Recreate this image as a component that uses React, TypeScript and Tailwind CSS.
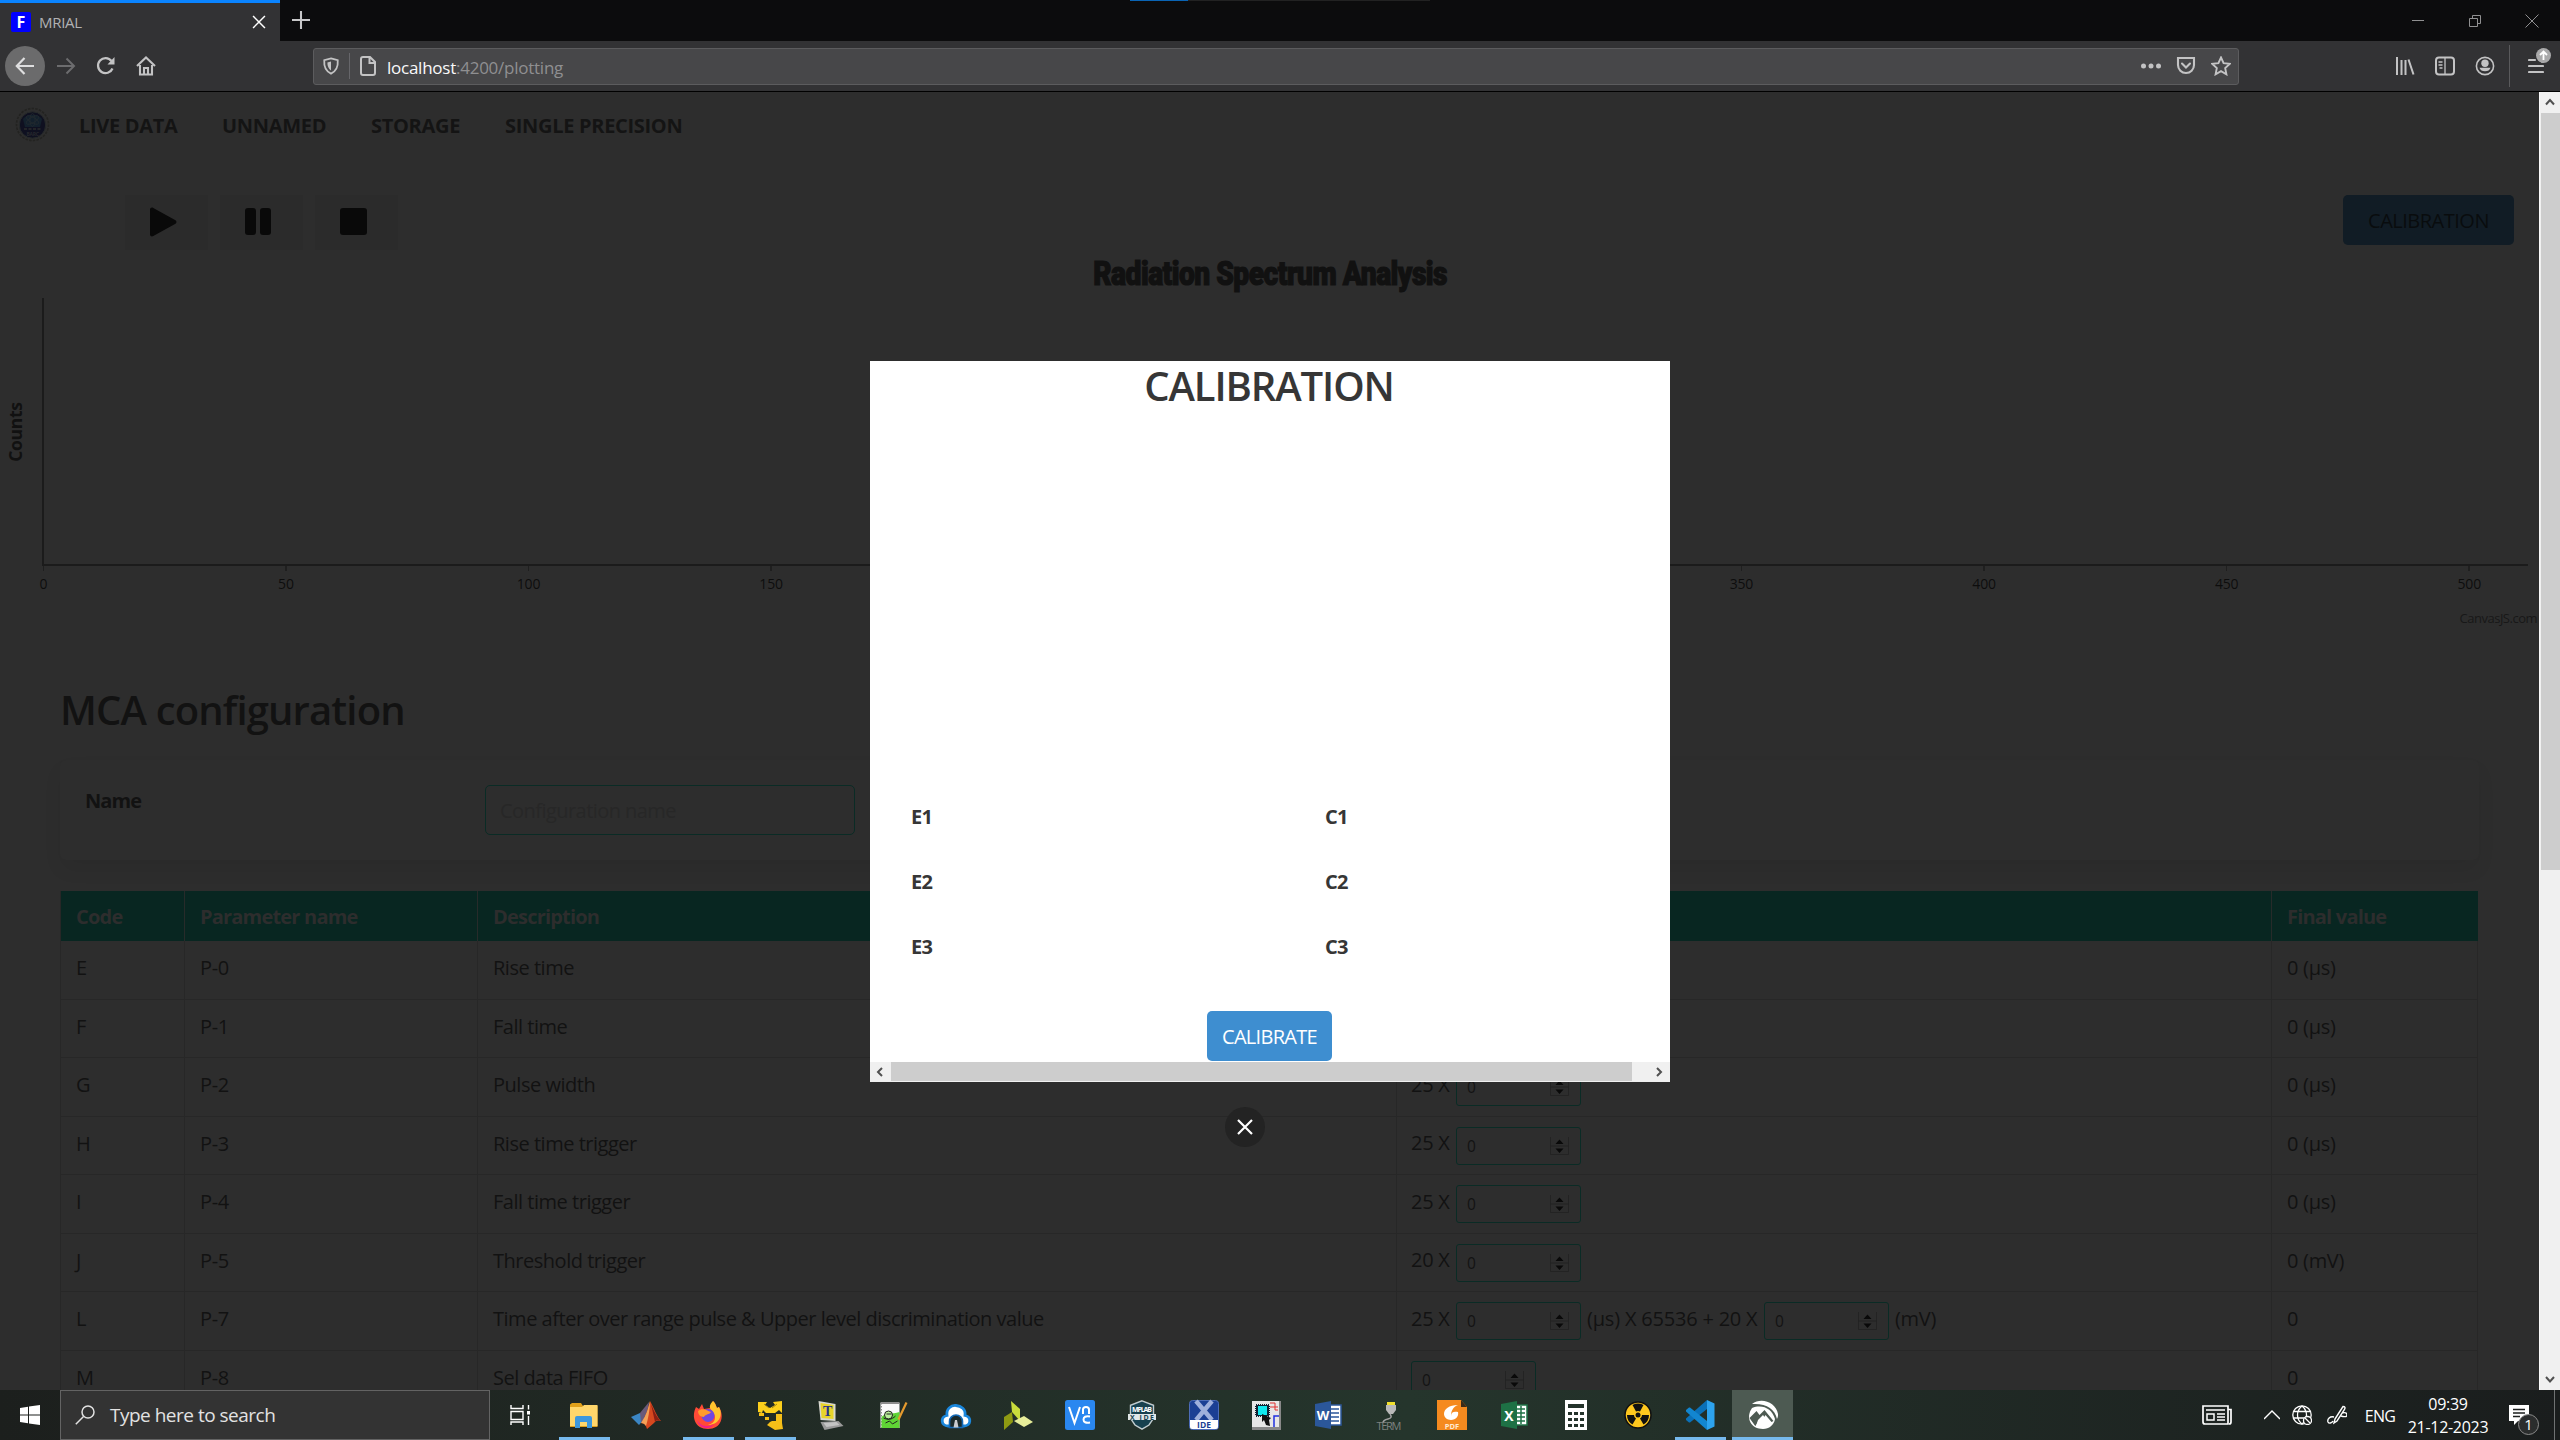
import React from "react";

type Children = { children?: React.ReactNode };

function Glyph({ s = 20, vb = 20, w = 1.8, className = "", children }: Children & { s?: number; vb?: number; w?: number; className?: string }) {
  return (
    <svg
      width={s}
      height={s}
      viewBox={`0 0 ${vb} ${vb}`}
      fill="none"
      stroke="currentColor"
      strokeWidth={w}
      className={`shrink-0 ${className}`}
    >
      {children}
    </svg>
  );
}

/* ---------- browser chrome ---------- */

function TabStrip() {
  return (
    <div className="relative flex h-[41px] shrink-0 bg-[#0c0c0d]">
      <div className="flex w-[280px] items-center border-t-[3px] border-t-[#0a84ff] bg-[#323234] pl-[11px] pr-[14px]">
        <div className="flex h-5 w-5 items-center justify-center rounded-[2px] bg-[#0000ff] text-[16px] leading-none font-bold text-white">F</div>
        <span className="ml-2 text-[15px] leading-[20px] tracking-[-0.3px] text-[#b1b1b3]">MRIAL</span>
        <Glyph s={14} w={2.2} className="ml-auto text-white">
          <path d="M1.5 1.5 18.5 18.5M18.5 1.5 1.5 18.5" />
        </Glyph>
      </div>
      <Glyph s={18} w={2.3} className="ml-3 mt-[11px] text-[#c8c8c9]">
        <path d="M10 0v20M0 10h20" />
      </Glyph>
      <div className="absolute left-[1130px] top-0 flex h-px w-[300px] bg-[#222]">
        <div className="w-[58px] bg-[#0a64b4]" />
      </div>
      <div className="ml-auto flex items-center gap-[43px] pr-[21px] text-[#909091]">
        <Glyph s={14} vb={14} w={1}>
          <path d="M1 6.5h12" />
        </Glyph>
        <Glyph s={14} vb={14} w={1}>
          <path d="M1.5 4.5h8v8h-8zM4.5 4.500v-3h8v8h-3" />
        </Glyph>
        <Glyph s={14} vb={14} w={1}>
          <path d="M.5.5l13 13M13.500.5l-13 13" />
        </Glyph>
      </div>
    </div>
  );
}

function NavBar() {
  return (
    <div className="flex h-[51px] shrink-0 items-center border-b border-black bg-[#323234] text-[#c3c3c4]">
      <div className="ml-[5px] flex h-10 w-10 items-center justify-center rounded-full bg-[#6b6b6c] text-[#dededf]">
        <Glyph w={2.2}>
          <path d="M19 10H2M9.500 2 1.800 10l7.700 8" />
        </Glyph>
      </div>
      <Glyph w={2} className="ml-[11px] text-[#6c6c6e]">
        <path d="M1 10h17M10.500 2.500 18 10l-7.500 7.500" />
      </Glyph>
      <Glyph w={2.3} className="ml-5">
        <path d="M16.500 12.500A7.500 7.500 0 1 1 15.500 5" />
        <path d="M18.500 1v7.500h-7z" fill="currentColor" stroke="none" />
      </Glyph>
      <Glyph w={2.1} className="ml-5">
        <path d="M1 10 10 1.500 19 10M4 9v9.500h12V9" />
        <path d="M8 18v-6h4v6" />
      </Glyph>
      <div className="ml-[157px] flex h-[37px] w-[1926px] items-center rounded-[3px] border border-[#5c5c5e] bg-[#474749]">
        <Glyph s={18} w={2} className="ml-2">
          <path d="M10 1.500 17.500 3.500c.5 7-1 12-7.500 15-6.500-3-8-8-7.500-15z" />
          <path d="M10 5v10c-3-2-4-5-4-8.800z" fill="currentColor" stroke="none" />
        </Glyph>
        <div className="ml-[9px] h-[26px] w-px bg-[#66666a]" />
        <Glyph s={20} w={2} className="ml-2">
          <path d="M3 3a2 2 0 0 1 2-2h7l5 5v11a2 2 0 0 1-2 2H5a2 2 0 0 1-2-2zM11.500 1v6H17" />
        </Glyph>
        <span className="ml-[9px] pt-[3px] text-[17px] tracking-[-0.25px] text-[#8f8f91]">
          <span className="text-[#f9f9fa]">localhost</span>:4200/plotting
        </span>
        <Glyph className="ml-auto">
          <g fill="currentColor" stroke="none">
            <circle cx="2.500" cy="10" r="2.500" />
            <circle cx="10" cy="10" r="2.500" />
            <circle cx="17.500" cy="10" r="2.500" />
          </g>
        </Glyph>
        <Glyph w={2.100} className="ml-[15px]">
          <path d="M2 2h16v7a8 8 0 0 1-16 0z" />
          <path d="M6 7.500l4 4 4-4" strokeLinecap="round" />
        </Glyph>
        <Glyph w={1.900} className="mr-[7px] ml-[15px]">
          <path d="M10 1.500l2.600 5.700 6.100.7-4.500 4.200 1.200 6.200L10 15.200l-5.400 3.100 1.200-6.200L1.300 7.900l6.100-.7z" />
        </Glyph>
      </div>
      <Glyph w={2} className="ml-[156px]">
        <path d="M2 1v18M6.500 4v15M10.500 4v15M13.500 3.500l5 15" />
      </Glyph>
      <Glyph w={2} className="ml-5">
        <rect x="1" y="1.500" width="18" height="17" rx="3" />
        <path d="M10 2v16M3.500 6h4M3.500 9h4M4.500 12h3" strokeWidth="1.300" />
      </Glyph>
      <Glyph w={1.600} className="ml-5">
        <circle cx="10" cy="10" r="8.600" />
        <circle cx="10" cy="7.200" r="3.700" fill="currentColor" stroke="none" />
        <path d="M4.500 11.800h11a5.700 4.800 0 0 1-11 0z" fill="currentColor" stroke="none" />
      </Glyph>
      <div className="ml-[14px] h-[42px] w-px bg-[#5a5a5c]" />
      <div className="relative ml-[18px]">
        <Glyph s={16} vb={16} w={2.200}>
          <path d="M1 2h6M1 8h14M1 14h14" strokeLinecap="round" />
        </Glyph>
        <div className="absolute -top-[10px] left-[8px] flex h-[15px] w-[15px] items-center justify-center rounded-full bg-[#a9a9aa] text-white">
          <Glyph s={11} vb={11} w={1.800}>
            <path d="M5.500 10V1.500M2 5l3.500-3.500L9 5" />
          </Glyph>
        </div>
      </div>
    </div>
  );
}

/* ---------- page ---------- */

function Emblem() {
  return (
    <svg width="35" height="35" viewBox="0 0 35 35" className="mb-[2px] ml-[15px] shrink-0">
      <circle cx="17.500" cy="17.500" r="16" fill="none" stroke="#232321" strokeWidth="1.600" strokeDasharray="2.500 1.200" />
      <circle cx="17.500" cy="18" r="13.200" fill="#0f1020" stroke="#262a2a" />
      <path d="M8 12a13 13 0 0 1 19 0l-2 8H10z" fill="#13202c" />
      <g fill="none" stroke="#222a2e" strokeWidth=".8">
        <ellipse cx="17.500" cy="13" rx="7" ry="2.800" transform="rotate(30 17.500 13)" />
        <ellipse cx="17.500" cy="13" rx="7" ry="2.800" transform="rotate(-30 17.500 13)" />
        <ellipse cx="17.500" cy="13" rx="2.600" ry="6.500" />
      </g>
      <path d="M9 22h17" stroke="#222428" strokeWidth="2.200" strokeDasharray="3 1.500" />
      <text x="17.500" y="29" textAnchor="middle" fontSize="5" fontWeight="700" fill="#27282d">BARC</text>
    </svg>
  );
}

function SiteNav() {
  return (
    <nav className="flex h-[66px] shrink-0 items-center text-[20px] font-bold tracking-[-0.300px] text-[#141414]">
      <Emblem />
      <span className="ml-[29px] w-[143px] pt-[2px]">LIVE DATA</span>
      <span className="w-[149px] pt-[2px]">UNNAMED</span>
      <span className="w-[134px] pt-[2px]">STORAGE</span>
      <span className="pt-[2px]">SINGLE PRECISION</span>
    </nav>
  );
}

function Controls() {
  return (
    <div className="mt-[37px] flex h-[55px] shrink-0 items-start gap-3 pl-[125px] pr-[25px]">
      <div className="h-[55px] w-[83px] bg-[#2b2b2b] pl-[25px] pt-3">
        <svg width="27" height="30" viewBox="0 0 27 30" fill="#090909">
          <path d="M0 2.500C0 .6 2 0 3.300 1L25.500 13.300c1.300.8 1.300 2.600 0 3.400L3.300 29C2 30 0 29.400 0 27.500z" />
        </svg>
      </div>
      <div className="flex h-[55px] w-[83px] gap-1 bg-[#2b2b2b] pl-[25px] pt-[13px]">
        <div className="h-[27px] w-[11px] rounded-[3px] bg-[#090909]" />
        <div className="h-[27px] w-[11px] rounded-[3px] bg-[#090909]" />
      </div>
      <div className="h-[55px] w-[83px] bg-[#2b2b2b] pl-[25px] pt-[13px]">
        <div className="h-[27px] w-[27px] rounded-[3px] bg-[#090909]" />
      </div>
      <div className="ml-auto flex h-[50px] w-[171px] items-center justify-center rounded-[5px] bg-[#111c25] pt-[2px] text-[20px] tracking-[-0.5px] text-[#090c0e]">
        CALIBRATION
      </div>
    </div>
  );
}

const ticks = ["0", "50", "100", "150", "200", "250", "300", "350", "400", "450", "500"];

function Spectrum() {
  return (
    <section className="flex h-[384px] shrink-0 flex-col">
      <h2 className="flex h-[47px] shrink-0 items-center justify-center pl-px font-[Roboto] text-[33px] font-black text-[#111]">
        <span className="scale-x-[0.854] tracking-[-0.6px] whitespace-nowrap [-webkit-text-stroke:1.2px_#111]">Radiation Spectrum Analysis</span>
      </h2>
      <div className="mt-px flex h-[268px] shrink-0">
        <div className="flex w-[42px] items-center justify-center pr-[13px]">
          <span className="-rotate-90 text-[17.500px] font-bold tracking-[-0.300px] text-[#111]">Counts</span>
        </div>
        <div className="w-[2486px] border-b-2 border-l-2 border-[#1b1b1b]" />
      </div>
      <div className="-ml-[78px] flex">
        {ticks.map((t) => (
          <div key={t} className="flex w-[242.600px] shrink-0 flex-col items-center text-[14px] leading-[20px] tracking-[-0.200px] text-[#0d0d0d]">
            <div className="h-[5px] w-[1.500px] bg-[#1f1f1f]" />
            <span className="mt-[3px]">{t}</span>
          </div>
        ))}
      </div>
      <div className="mt-[14px] pr-[2px] text-right text-[13px] leading-[20px] tracking-[-0.500px] text-[#181818]">CanvasJS.com</div>
    </section>
  );
}

function NumberBox() {
  return (
    <div className="flex h-[38px] w-[125px] shrink-0 items-center justify-between rounded-[3px] border border-[#0a2b25] pl-[10px] pr-[11px]">
      <span className="pt-px text-[15.500px] text-[#131313]">0</span>
      <svg width="19" height="18" viewBox="0 0 19 18">
        <path d="M.5 0v17.500h18V0M.5 9h18" fill="none" stroke="#232323" />
        <path d="M5.500 7h8l-4-4.500zM5.500 11.500h8l-4 4.500z" fill="#090909" />
      </svg>
    </div>
  );
}

type Row = { code: string; name: string; desc: string; factor: string; final: string };

const rows: Row[] = [
  { code: "E", name: "P-0", desc: "Rise time", factor: "25 X", final: "0 (μs)" },
  { code: "F", name: "P-1", desc: "Fall time", factor: "25 X", final: "0 (μs)" },
  { code: "G", name: "P-2", desc: "Pulse width", factor: "25 X", final: "0 (μs)" },
  { code: "H", name: "P-3", desc: "Rise time trigger", factor: "25 X", final: "0 (μs)" },
  { code: "I", name: "P-4", desc: "Fall time trigger", factor: "25 X", final: "0 (μs)" },
  { code: "J", name: "P-5", desc: "Threshold trigger", factor: "20 X", final: "0 (mV)" },
  { code: "L", name: "P-7", desc: "Time after over range pulse & Upper level discrimination value", factor: "25 X", final: "0" },
  { code: "M", name: "P-8", desc: "Sel data FIFO", factor: "", final: "0" },
];

function ConfigTable() {
  const cell = "flex items-center border-r border-b border-[#272727] pl-[15px] pb-[3px] whitespace-pre";
  return (
    <div className="mt-[31px] w-[2418px] border-l border-[#272727] text-[20px] tracking-[-0.3px] text-[#121212]">
      <div className="grid h-[50px] grid-cols-[124px_293px_919px_875px_206px] bg-[#082621] font-bold tracking-[-0.8px] text-[#2d2d2d]">
        {["Code", "Parameter name", "Description", "Value", "Final value"].map((h, i) => (
          <div key={h} className={`flex items-center pl-[15px] pt-[2px] ${i < 4 ? "border-r border-[#272b2a]" : ""}`}>
            {h}
          </div>
        ))}
      </div>
      {rows.map((r) => (
        <div key={r.code} className="grid h-[58.500px] grid-cols-[124px_293px_919px_875px_206px]">
          <div className={cell}>{r.code}</div>
          <div className={cell}>{r.name}</div>
          <div className={`${cell} tracking-[-0.480px]`}>{r.desc}</div>
          <div className="flex items-center border-r border-b border-[#272727] pt-px pl-[14px] whitespace-pre">
            {r.factor && <span className="w-[45px] pb-[5px]">{r.factor}</span>}
            <NumberBox />
            {r.code === "L" && (
              <>
                <span className="w-[183px] pb-[5px] pl-[6px] tracking-[-0.200px]">(μs) X 65536 + 20 X</span>
                <NumberBox />
                <span className="pb-[5px] pl-[6px]">(mV)</span>
              </>
            )}
          </div>
          <div className={cell}>{r.final}</div>
        </div>
      ))}
    </div>
  );
}

function PageBody() {
  return (
    <div className="flex min-w-0 flex-1 flex-col overflow-hidden bg-[#2d2d2d]">
      <SiteNav />
      <Controls />
      <Spectrum />
      <section className="shrink-0 pl-[60px]">
        <h1 className="mt-[46px] h-[60px] text-[40px] leading-[60px] font-semibold tracking-[-0.850px] text-[#121212]">MCA configuration</h1>
        <div className="mt-[20px] flex h-[100px] w-[2419px] rounded-[6px] bg-[#2d2d2d] pl-[25px] shadow-[0_10px_20px_-2px_rgba(0,0,0,0.07)]">
          <span className="w-[400px] pt-[26px] text-[20px] leading-[30px] font-bold tracking-[-0.900px] text-[#121212]">Name</span>
          <div className="mt-[25px] flex h-[50px] w-[370px] items-center rounded-[5px] border border-[#0a2b25] pt-[2px] pl-[14px] text-[20px] tracking-[-0.550px] text-[#272727]">
            Configuration name
          </div>
        </div>
        <ConfigTable />
      </section>
    </div>
  );
}

function PageScrollbar() {
  return (
    <div className="flex w-[21px] shrink-0 flex-col items-center border-l border-[#fafafa] bg-[#f0f0f0] text-[#505050]">
      <Glyph s={10} vb={10} w={2} className="mt-[5px] mb-[6px]">
        <path d="M1 7.500l4-4.500 4 4.500" />
      </Glyph>
      <div className="h-[757px] w-[19px] bg-[#cdcdcd]" />
      <Glyph s={10} vb={10} w={2} className="mt-auto mb-[6px]">
        <path d="M1 3l4 4.500L9 3" />
      </Glyph>
    </div>
  );
}

function CalibrationDialog() {
  return (
    <div className="absolute left-[870px] top-[361px] flex h-[721px] w-[800px] flex-col bg-white text-[#363636]">
      <h2 className="h-[50px] pr-[2px] text-center text-[40px] leading-[49px] font-semibold tracking-[-1.100px]">CALIBRATION</h2>
      <div className="mt-[373px] grid grid-cols-[414px_1fr] pl-[41px] text-[20px] leading-[65px] font-bold tracking-[-0.800px]">
        {["E1", "C1", "E2", "C2", "E3", "C3"].map((l) => (
          <span key={l}>{l}</span>
        ))}
      </div>
      <div className="mt-[32px] ml-[337px] flex h-[50px] w-[125px] items-center justify-center rounded-[5px] bg-[#3e8ed0] pt-[2px] text-[20px] tracking-[-0.700px] text-white">
        CALIBRATE
      </div>
      <div className="mt-px flex h-5 items-center bg-[#f0f0f0] text-[#505050]">
        <Glyph s={10} vb={10} w={2} className="ml-[5px] mr-[6px]">
          <path d="M7 1 3 5l4 4" />
        </Glyph>
        <div className="mb-px h-[19px] w-[741px] bg-[#cdcdcd]" />
        <Glyph s={10} vb={10} w={2} className="ml-auto mr-[6px]">
          <path d="M3 1l4 4-4 4" />
        </Glyph>
      </div>
      <div className="absolute left-[355px] top-[746px] flex h-10 w-10 items-center justify-center rounded-full bg-[#232323] text-white">
        <Glyph s={16} vb={16} w={2.200}>
          <path d="M1 1l14 14M15 1 1 15" />
        </Glyph>
      </div>
    </div>
  );
}

/* ---------- taskbar ---------- */

const apps: { id: string; on?: boolean; active?: boolean; art: React.ReactNode }[] = [
  {
    id: "explorer",
    on: true,
    art: (
      <>
        <path d="M1 4.500 3 3h9l2 3h14.500v21H1z" fill="#e0a01a" />
        <path d="M1 7h12l2-2h13.500v21H1z" fill="#ffd66b" />
        <path d="M6 28V18q0-2 2-2h13q2 0 2 2v10h-5v-6h-7v6z" fill="#3d97dc" />
      </>
    ),
  },
  {
    id: "matlab",
    art: (
      <>
        <path d="M0 17l9-4 5 5-6 7z" fill="#3b86c4" />
        <path d="M9 13l9-11c-1 9-3 14-8 20z" fill="#6a5a7a" />
        <path d="M19 1c4 7 7 16 11 20-3-1-5-1-7 2l-7 6c-1-4-3-6-6-6C15 16 17 9 19 1z" fill="#d7481f" />
        <path d="M19 1c0 9-2 18-4 25-1-2-3-3-5-3C15 16 17 9 19 1z" fill="#f4a258" />
        <path d="M20 4c3 7 6 14 10 17-3-1-5-1-6 1z" fill="#8a1f14" />
      </>
    ),
  },
  {
    id: "firefox",
    on: true,
    art: (
      <>
        <path d="M3 7l3 2 3-5 2 5 6-1 3-7c3 3 3 5 4 7l2-1c6 10 2 22-11 22C2 29-2 17 3 7z" fill="#ff4a36" />
        <path d="M20 1c-4 4-4 7-1 10 5 5 4 12-4 14 10 0 16-9 11-18l-2 1c-1-2-1-4-4-7z" fill="#ffc52e" />
        <path d="M4 20c3 6 11 8 17 4-2 5-14 7-17-4z" fill="#f0208c" />
        <circle cx="15" cy="15.500" r="6.500" fill="#7048e0" />
        <path d="M5 11c5-4 9 0 13 1-2 3-6 2-7 5-4 0-6-3-6-6z" fill="#ff9c2c" />
      </>
    ),
  },
  {
    id: "flow",
    on: true,
    art: (
      <>
        <path d="M3 2h9l-2 3 5 3 5-3-2-3 9-1v12l-3-3-4 3h-9L8 10l-1 3-4-1z" fill="#fdd01c" />
        <path d="M10 17h4v3h-4zM4 13h5v3H4zM17 21h4v-7h6v9l1 6-8 1-8-5 3-3z" fill="#f6bf18" />
        <path d="M9 4l5 4M22 4l-5 4" stroke="#8a7010" strokeWidth=".8" />
      </>
    ),
  },
  {
    id: "teraterm",
    art: (
      <g transform="translate(-2.500 0)">
        <path d="M4 1l17 3v17L6 20z" fill="#d8d8d0" />
        <path d="M6 3l13 2v14L7 18z" fill="#e8d42a" />
        <text x="8.500" y="16" fontFamily="Liberation Serif" fontSize="14" fontWeight="700" fill="#28348a">T</text>
        <path d="M6 22l18-1 5 5-19 4z" fill="#9a9a9a" />
        <path d="M9 23l13-1 3 3-13 2z" fill="#c4c4c4" />
      </g>
    ),
  },
  {
    id: "notepad",
    art: (
      <g transform="translate(-1.500 0)">
        <path d="M3 3h19v25H3z" fill="#fafafa" />
        <path d="M4 3v25" stroke="#909090" strokeDasharray="1.500 1.500" />
        <path d="M3 2h19v2H3z" fill="#8d8d8d" />
        <path d="M4 17c6-6 10-2 18-5v16H4z" fill="#5fd435" />
        <circle cx="11" cy="15" r="4" fill="#b9ee9a" stroke="#222" />
        <path d="M9 14h5M6 18c4 2 8 2 12-2M8 23l4-2 3 3 5-3" stroke="#222" fill="none" />
        <path d="M20 19 28 2l2 1-8 17z" fill="#e49a2e" />
      </g>
    ),
  },
  {
    id: "cloud",
    art: (
      <>
        <path d="M7 26C0 26-1 17 6 15.500 5 9 10 5 15 5.500S25 9 24 15.500C31 17 30 26 23 26z" fill="#fff" stroke="#1b87dc" strokeWidth="2.800" />
        <path d="M8.500 27.500v-6a6.500 6.500 0 0 1 13 0v6z" fill="#1b2a2b" stroke="#1468b4" strokeWidth="1.600" />
        <path d="M14 20h2l1.500 7.500h-5z" fill="#c9ccd0" />
      </>
    ),
  },
  {
    id: "vivado",
    art: (
      <>
        <path d="M8 1l9 8v12l-8-9z" fill="#c9dc3c" />
        <path d="M1 17l8-5 1 10-9 8z" fill="#8f9a12" />
        <path d="M11 21l10-5 9 6-9 5z" fill="#e7ee9a" />
      </>
    ),
  },
  {
    id: "vnc",
    art: (
      <>
        <rect width="30" height="30" rx="2.500" fill="#2a87f0" />
        <path d="M4 7l5.500 16L15 7M18 14V9.500q0-2.500 3-2.500t3 2.500V14M25 16.500q-6.500-1-6.500 3t6.500 3" fill="none" stroke="#fff" strokeWidth="2" />
      </>
    ),
  },
  {
    id: "mplab",
    art: (
      <>
        <path d="M15 .8l11.500 4.500v13L22 25l-7 4.200L8 25l-4.500-6.700v-13z" fill="#17414f" stroke="#c2cdd0" strokeWidth="1.400" />
        <path d="M1 14h28v6H1z" fill="#dfe6e8" />
        <text x="15" y="12" textAnchor="middle" fontSize="7" fontWeight="700" fill="#fff" textLength="20">MPLAB</text>
        <text x="15" y="19.500" textAnchor="middle" fontSize="7" fontWeight="700" fill="#17414f" textLength="24">X IDE</text>
      </>
    ),
  },
  {
    id: "xide",
    art: (
      <>
        <rect x=".5" y=".5" width="29" height="29" rx="3" fill="#1b3f94" stroke="#4d6cb8" />
        <path d="M7 1l16 19M23 1 7 20" stroke="#9fb0dc" strokeWidth="4.500" />
        <path d="M1 20h28v7q0 2-2 2H3q-2 0-2-2z" fill="#fff" />
        <text x="15" y="28" textAnchor="middle" fontSize="8.500" fontWeight="700" fill="#1b3f94">IDE</text>
      </>
    ),
  },
  {
    id: "pcb",
    art: (
      <>
        <path d="M1 1h29v29H1z" fill="#888" />
        <path d="M1 1h27v26H1z" fill="#e6e6e6" />
        <path d="M5 5h13v11H5z" fill="#123" strokeDasharray="1 1" stroke="#123" strokeWidth="2" />
        <path d="M7 6h9v9H7z" fill="#10e8ee" />
        <path d="M19 3h5v7h3M19 7h8" fill="none" stroke="#e03030" />
        <path d="M23 27V16h5" fill="none" stroke="#2030e0" strokeWidth="1.500" />
        <path d="M11 14l9 4-2 2 1 6-4-1-2-5-2 2z" fill="#111" />
      </>
    ),
  },
  {
    id: "word",
    art: (
      <>
        <path d="M16 5h12v20H16z" fill="#fff" stroke="#2b579a" strokeWidth="1.500" />
        <path d="M18 9h8M18 13h8M18 17h8M18 21h8" stroke="#2b579a" strokeWidth="1.500" />
        <path d="M2 4l16-3v28L2 26z" fill="#2b579a" />
        <text x="10" y="20" textAnchor="middle" fontSize="13" fontWeight="700" fill="#fff">W</text>
      </>
    ),
  },
  {
    id: "term",
    art: (
      <g transform="translate(-1 0)">
        <path d="M13 2h8v4h-8z" fill="#f1e02c" />
        <path d="M12 5h10v5l-3 4h-4l-3-4z" fill="#b9b9b9" />
        <path d="M16 14q3 4-2 5t-5 4" fill="none" stroke="#a0a0a0" strokeWidth="1.500" />
        <text x="15" y="30" textAnchor="middle" fontSize="11" fill="#7d827f" textLength="25">TERM</text>
      </g>
    ),
  },
  {
    id: "foxit",
    art: (
      <>
        <path d="M0 0h24l6 7v23H0z" fill="#f58a1f" />
        <path d="M24 0v7h6z" fill="#3a2a18" />
        <path d="M21 5C12 5 7 9 7 14c0 3 3 6 7 6 5 0 8-4 7-8-4-1-7 0-7 4 0-5 2-9 7-11z" fill="#fff" />
        <text x="15" y="28.500" textAnchor="middle" fontSize="7.500" fontWeight="700" fill="#ffe9d2">PDF</text>
      </>
    ),
  },
  {
    id: "excel",
    art: (
      <>
        <path d="M16 5h12v20H16z" fill="#fff" stroke="#1e7145" strokeWidth="1.500" />
        <path d="M18 9h8M18 13h8M18 17h8M18 21h8M22 6v18" stroke="#1e7145" strokeWidth="1.500" />
        <path d="M2 4l16-3v28L2 26z" fill="#1e7145" />
        <text x="10" y="20.500" textAnchor="middle" fontSize="14" fontWeight="700" fill="#fff">X</text>
      </>
    ),
  },
  {
    id: "calc",
    art: (
      <>
        <path d="M4 0h22v30H4z" fill="#fff" />
        <path d="M7 4h16v4H7zM7 12h4v3H7zM13 12h4v3h-4zM19 12h4v3h-4zM7 18h4v3H7zM13 18h4v3h-4zM19 18h4v3h-4zM7 24h4v3H7zM13 24h4v3h-4zM19 24h4v3h-4z" fill="#24332b" />
      </>
    ),
  },
  {
    id: "radiation",
    art: (
      <>
        <circle cx="15" cy="15" r="13" fill="#ffc81e" stroke="#111" strokeWidth="1.500" />
        <circle cx="15" cy="15" r="2.500" fill="#111" />
        <path d="M13 11.500 9.500 5a12 12 0 0 1 11 0L17 11.500a4 4 0 0 0-4 0zM11 15H4a11 11 0 0 0 5.500 9.500l3.500-6a4 4 0 0 1-2-3.500zM19 15h7a11 11 0 0 1-5.500 9.500l-3.500-6a4 4 0 0 0 2-3.500z" fill="#111" />
      </>
    ),
  },
  {
    id: "vscode",
    on: true,
    art: (
      <>
        <path d="M22 9v-9L1 18.500v1.500l3 2.500h1z" fill="#0a70b8" />
        <path d="M22 21v9L1 11.500V10l3-2.500h1z" fill="#1286d0" />
        <path d="M22 0l7.500 3.500v23L22 30z" fill="#2da3ee" />
      </>
    ),
  },
  {
    id: "active",
    on: true,
    active: true,
    art: (
      <>
        <path d="M4 4C13-3 28 2 30 14c.2 2-.4 4-1 5C27 9 18 3 4 4z" fill="#fff" />
        <path d="M4 8C15 4 24 9 27 19c-1 6-6 10-12 10C3 29-3 18 4 8z" fill="#fff" />
        <path d="M1.500 18 8.500 11l3 4 5-5 9 11-2 1-6-7-2 3-3 0-5 8-1-1z" fill="#4d5a52" />
        <path d="M10 20l5-5 8 11H8z" fill="#fff" />
      </>
    ),
  },
];

function Taskbar() {
  return (
    <div className="flex h-[50px] shrink-0 bg-gradient-to-r from-[#1c1f1d] via-[#25352c] via-55% to-[#1a1d1d] text-white">
      <div className="flex w-[60px] items-center justify-center">
        <svg width="20" height="20" viewBox="0 0 20 20" fill="#fff">
          <path d="M0 3l8-1.200V9.500H0zM9 1.600 20 0v9.500H9zM0 10.500h8v7.700L0 17zM9 10.500h11V20L9 18.400z" />
        </svg>
      </div>
      <div className="flex w-[430px] items-center border border-[#636363] bg-[#333] pl-[14px] text-[19px] tracking-[-0.500px] text-[#e2e2e2]">
        <Glyph w={1.500}>
          <circle cx="13" cy="7" r="6" />
          <path d="M8.500 11.500.8 19.200" />
        </Glyph>
        <span className="ml-[15px] pt-px">Type here to search</span>
      </div>
      <div className="flex w-[63px] items-center pl-[20px]">
        <Glyph w={1.400}>
          <path d="M1 0v3.500h12V0M1 6.500h12v8H1zM1 20v-3h12v3M18.500 0v4.500M18.500 11v9" />
          <path d="M17 6h3v3.500h-3z" fill="currentColor" stroke="none" />
        </Glyph>
      </div>
      <div className="flex">
        {apps.map((a) => (
          <div key={a.id} className={a.active ? "relative ml-px flex w-[61px] items-center justify-center bg-[#4d5a52]" : "relative flex w-[62px] items-center justify-center"}>
            <svg width="30" height="30" viewBox="0 0 30 30" className="overflow-visible">{a.art}</svg>
            {a.on && <div className={a.active ? "absolute inset-x-0 bottom-0 h-[3px] bg-[#76b9ed]" : "absolute inset-x-[5.500px] bottom-0 h-[3px] bg-[#76b9ed]"} />}
          </div>
        ))}
      </div>
      <div className="ml-auto flex items-center text-[16px]">
        <svg width="30" height="20" viewBox="0 0 30 20" fill="none" stroke="#fff" strokeWidth="1.700">
          <path d="M1 1h25v18H3q-2 0-2-2zM26 4.500h3V17q0 2-2 2" />
          <path d="M4 5h19M15 9h8M15 12h8M15 15h8M5 9h7v6H5z" strokeWidth="1.500" />
        </svg>
        <Glyph s={16} vb={16} w={1.400} className="ml-[32px]">
          <path d="M0 12 8 4l8 8" />
        </Glyph>
        <Glyph w={1.300} className="ml-3">
          <circle cx="10" cy="10" r="9.200" />
          <path d="M10 1c-6 5-6 13 0 18M10 1c6 5 6 13 0 18M2 6.500h16M1.500 13h17" />
          <circle cx="15.500" cy="15.500" r="4" fill="#1c1f1e" />
          <path d="M13 13l5 5" />
        </Glyph>
        <Glyph w={1.400} className="ml-[15px]">
          <path d="M8 14 16 1.500q3 0 1.500 3L10 16l-3 2zM7 12c-4-1-7 2-6 5 1 2 4 1 5-1M15 8c3-1 5 0 5 2s-3 2-6 1" />
        </Glyph>
        <span className="ml-[18px] pt-[2px] tracking-[-0.800px]">ENG</span>
        <div className="ml-[15px] flex w-[76px] flex-col items-center pt-px leading-[23px] tracking-[-0.300px] whitespace-nowrap">
          <span>09:39</span>
          <span>21-12-2023</span>
        </div>
        <div className="relative ml-[23px]">
          <svg width="20" height="20" viewBox="0 0 20 20">
            <path d="M0 0h20v16H9l-4 4v-4H0z" fill="#fff" />
            <path d="M4 4.500h12M4 8h12M4 11.500h7" stroke="#1c1f1e" strokeWidth="1.300" />
          </svg>
          <div className="absolute left-[9px] top-[9px] flex h-[21px] w-[21px] items-center justify-center rounded-full border border-[#8b8b8b] bg-[#2b2d2d] text-[15px] leading-none">
            1
          </div>
        </div>
        <div className="ml-[25px] mr-[5px] h-[50px] w-px bg-[#6f7272]" />
      </div>
    </div>
  );
}

export default function App() {
  return (
    <div className="relative flex h-[1440px] w-[2560px] flex-col overflow-hidden bg-[#2d2d2d] font-['Open_Sans',sans-serif]">
      <TabStrip />
      <NavBar />
      <div className="flex min-h-0 flex-1">
        <PageBody />
        <PageScrollbar />
      </div>
      <CalibrationDialog />
      <Taskbar />
    </div>
  );
}
